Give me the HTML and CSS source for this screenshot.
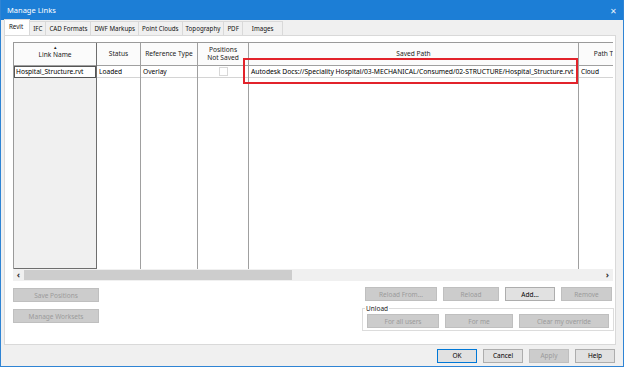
FILE: index.html
```html
<!DOCTYPE html>
<html lang="en">
<head>
    <meta charset="UTF-8">
    <title>Manage Links</title>
    <link rel="stylesheet" href="styles.css">
</head>
<body>
    <div class="window">
        <div class="titlebar">
            <span class="title">Manage Links</span>
            <span class="close">&#x2715;</span>
        </div>

        <!-- Вкладки -->
        <div class="tabs">
            <span class="tab active">Revit</span>
            <span class="tab">IFC</span>
            <span class="tab">CAD Formats</span>
            <span class="tab">DWF Markups</span>
            <span class="tab">Point Clouds</span>
            <span class="tab">Topography</span>
            <span class="tab">PDF</span>
            <span class="tab wide">Images</span>
        </div>

        <div class="panel">
            <div class="grid-wrap">
                <div class="grid">
                    <div class="col c-name">
                        <div class="head"><span class="sort">&#9652;</span>Link Name</div>
                        <div class="cell selected">Hospital_Structure.rvt</div>
                        <div class="fill"></div>
                    </div>
                    <div class="col c-status">
                        <div class="head">Status</div>
                        <div class="cell">Loaded</div>
                        <div class="fill"></div>
                    </div>
                    <div class="col c-ref">
                        <div class="head">Reference Type</div>
                        <div class="cell">Overlay</div>
                        <div class="fill"></div>
                    </div>
                    <div class="col c-pos">
                        <div class="head">Positions<br>Not Saved</div>
                        <div class="cell center"><span class="check"></span></div>
                        <div class="fill"></div>
                    </div>
                    <div class="col c-path">
                        <div class="head">Saved Path</div>
                        <div class="cell">Autodesk Docs://Speciality Hospital/03-MECHANICAL/Consumed/02-STRUCTURE/Hospital_Structure.rvt</div>
                        <div class="fill"></div>
                    </div>
                    <div class="col c-type">
                        <div class="head">Path Type</div>
                        <div class="cell">Cloud</div>
                        <div class="fill"></div>
                    </div>
                </div>
                <!-- Красная рамка-выделение -->
                <div class="highlight"></div>
            </div>

            <div class="hscroll">
                <span class="arrow">&#8249;</span>
                <span class="thumb"></span>
                <span class="track"></span>
                <span class="arrow">&#8250;</span>
            </div>

            <div class="actions">
                <div class="left-buttons">
                    <button class="btn disabled wide-btn">Save Positions</button>
                    <button class="btn disabled wide-btn">Manage Worksets</button>
                </div>
                <div class="right-buttons">
                    <div class="row">
                        <button class="btn disabled b-reload-from">Reload From...</button>
                        <button class="btn disabled b-reload">Reload</button>
                        <button class="btn b-add">Add...</button>
                        <button class="btn disabled b-remove">Remove</button>
                    </div>
                    <fieldset class="unload">
                        <legend>Unload</legend>
                        <button class="btn disabled b-all">For all users</button>
                        <button class="btn disabled b-me">For me</button>
                        <button class="btn disabled b-clear">Clear my override</button>
                    </fieldset>
                </div>
            </div>
        </div>

        <div class="footer">
            <button class="btn b-ok">OK</button>
            <button class="btn b-foot">Cancel</button>
            <button class="btn disabled b-foot">Apply</button>
            <button class="btn b-foot">Help</button>
        </div>
    </div>
</body>
</html>
```

FILE: styles.css
```css
/* Основные стили */
body {
    margin: 0;
    width: 624px;
    height: 367px;
    overflow: hidden;
    font-family: 'Noto Sans', 'Open Sans', sans-serif;
    font-size: 6.6px;
    color: #000;
    background: #fff;
}

.window {
    width: 624px;
    height: 367px;
    box-sizing: border-box;
    border: 1px solid #2f84d4;
    border-top: none;
    background: #f0f0f0;
    display: flex;
    flex-direction: column;
}

.titlebar {
    height: 20px;
    background: #1c7ed6;
    color: #fff;
    display: flex;
    align-items: center;
    justify-content: space-between;
    padding: 0 6px 0 6px;
    font-size: 7.5px;
}

.close {
    font-size: 8px;
    color: #e8f2fb;
}

/* Вкладки */
.tabs {
    height: 15px;
    display: flex;
    align-items: flex-end;
    padding-left: 3px;
}

.tab {
    height: 13px;
    line-height: 13px;
    padding: 0 3px;
    border: 1px solid #d9d9d9;
    border-bottom: none;
    margin-right: -1px;
    background: #f0f0f0;
    font-size: 6.2px;
    color: #111;
}

.tab.active {
    background: #fff;
    height: 15px;
    line-height: 14px;
    padding: 0 6px 0 4px;
}

.tab.wide {
    padding: 0 9px;
}

.panel {
    height: 310px;
    margin: 0 7px 0 3px;
    background: #fff;
    border: 1px solid #d9d9d9;
    box-sizing: border-box;
    padding: 6px 0 0 8px;
    display: flex;
    flex-direction: column;
}

/* Таблица */
.grid-wrap {
    position: relative;
    width: 600px;
    height: 227px;
    overflow: hidden;
}

.grid {
    display: flex;
    height: 100%;
    border-top: 1px solid #9a9a9a;
    border-left: 1px solid #9a9a9a;
    box-sizing: border-box;
}

.col {
    display: flex;
    flex-direction: column;
    border-right: 1px solid #a0a0a0;
    flex-shrink: 0;
}

.c-name { width: 82px; border-right-color: #6e6e6e; }
.c-status { width: 43px; }
.c-ref { width: 56px; }
.c-pos { width: 50px; }
.c-path { width: 329px; }
.c-type { width: 60px; }

.head {
    height: 22px;
    border-bottom: 1px solid #a0a0a0;
    display: flex;
    flex-direction: column;
    align-items: center;
    justify-content: center;
    text-align: center;
    line-height: 8px;
    color: #222;
    background: #fbfbfb;
}

.sort {
    font-size: 5px;
    line-height: 5px;
    margin-top: -4px;
    margin-bottom: 1px;
}

.cell {
    height: 11px;
    line-height: 11px;
    padding-left: 2px;
    border-bottom: 1px solid #d4d4d4;
    white-space: nowrap;
    overflow: hidden;
}

.c-path .cell {
    font-size: 6.75px;
    letter-spacing: -0.03px;
}

.cell.center {
    display: flex;
    align-items: center;
    justify-content: center;
    padding: 0;
}

.cell.selected {
    border: 1px solid #555;
    height: 10px;
    line-height: 10px;
    padding-left: 1px;
}

.check {
    width: 7px;
    height: 7px;
    border: 1px solid #d8d8d8;
    background: #fff;
}

.fill {
    flex: 1;
}

.c-name .fill {
    background: #f0f0f0;
    border-bottom: 1px solid #6e6e6e;
}

.highlight {
    position: absolute;
    left: 230px;
    top: 16px;
    width: 331px;
    height: 22px;
    border: 2px solid #e2232b;
}

/* Полоса прокрутки */
.hscroll {
    width: 600px;
    height: 12px;
    display: flex;
    align-items: center;
    background: #f0f0f0;
}

.arrow {
    width: 11px;
    text-align: center;
    font-size: 9px;
    line-height: 12px;
    color: #333;
    font-weight: bold;
}

.thumb {
    width: 268px;
    height: 10px;
    background: #cdcdcd;
}

.track {
    flex: 1;
}

/* Кнопки */
.btn {
    font-family: inherit;
    font-size: 6.5px;
    height: 14px;
    padding: 0;
    margin: 0;
    border: 1px solid #adadad;
    background: #e1e1e1;
    color: #000;
    box-sizing: border-box;
}

.btn.disabled {
    background: #cccccc;
    border-color: #bfbfbf;
    color: #9b9b9b;
}

.actions {
    display: flex;
    justify-content: space-between;
    padding-top: 6px;
}

.left-buttons {
    display: flex;
    flex-direction: column;
    gap: 7px;
    padding-top: 1px;
}

.wide-btn {
    width: 86px;
}

.right-buttons {
    width: 251px;
    margin-right: 2px;
}

.row {
    display: flex;
    gap: 6px;
    justify-content: flex-end;
    padding-right: 1px;
}

.b-reload-from { width: 72px; }
.b-reload { width: 56px; }
.b-add { width: 50px; }
.b-remove { width: 51px; }

.unload {
    margin: 3px 0 0 0;
    padding: 1px 4px 3px 4px;
    border: 1px solid #dcdcdc;
    display: flex;
    gap: 6px;
    height: 27px;
    box-sizing: border-box;
}

.unload legend {
    padding: 0 1px;
    margin-left: -2px;
    font-size: 6.5px;
    color: #222;
}

.b-all { width: 72px; }
.b-me { width: 68px; }
.b-clear { width: 90px; }

.footer {
    flex: 1;
    display: flex;
    justify-content: flex-end;
    align-items: center;
    gap: 6px;
    padding-right: 8px;
}

.b-foot {
    width: 40px;
}

.b-ok {
    width: 40px;
    border-color: #0078d7;
}
```
